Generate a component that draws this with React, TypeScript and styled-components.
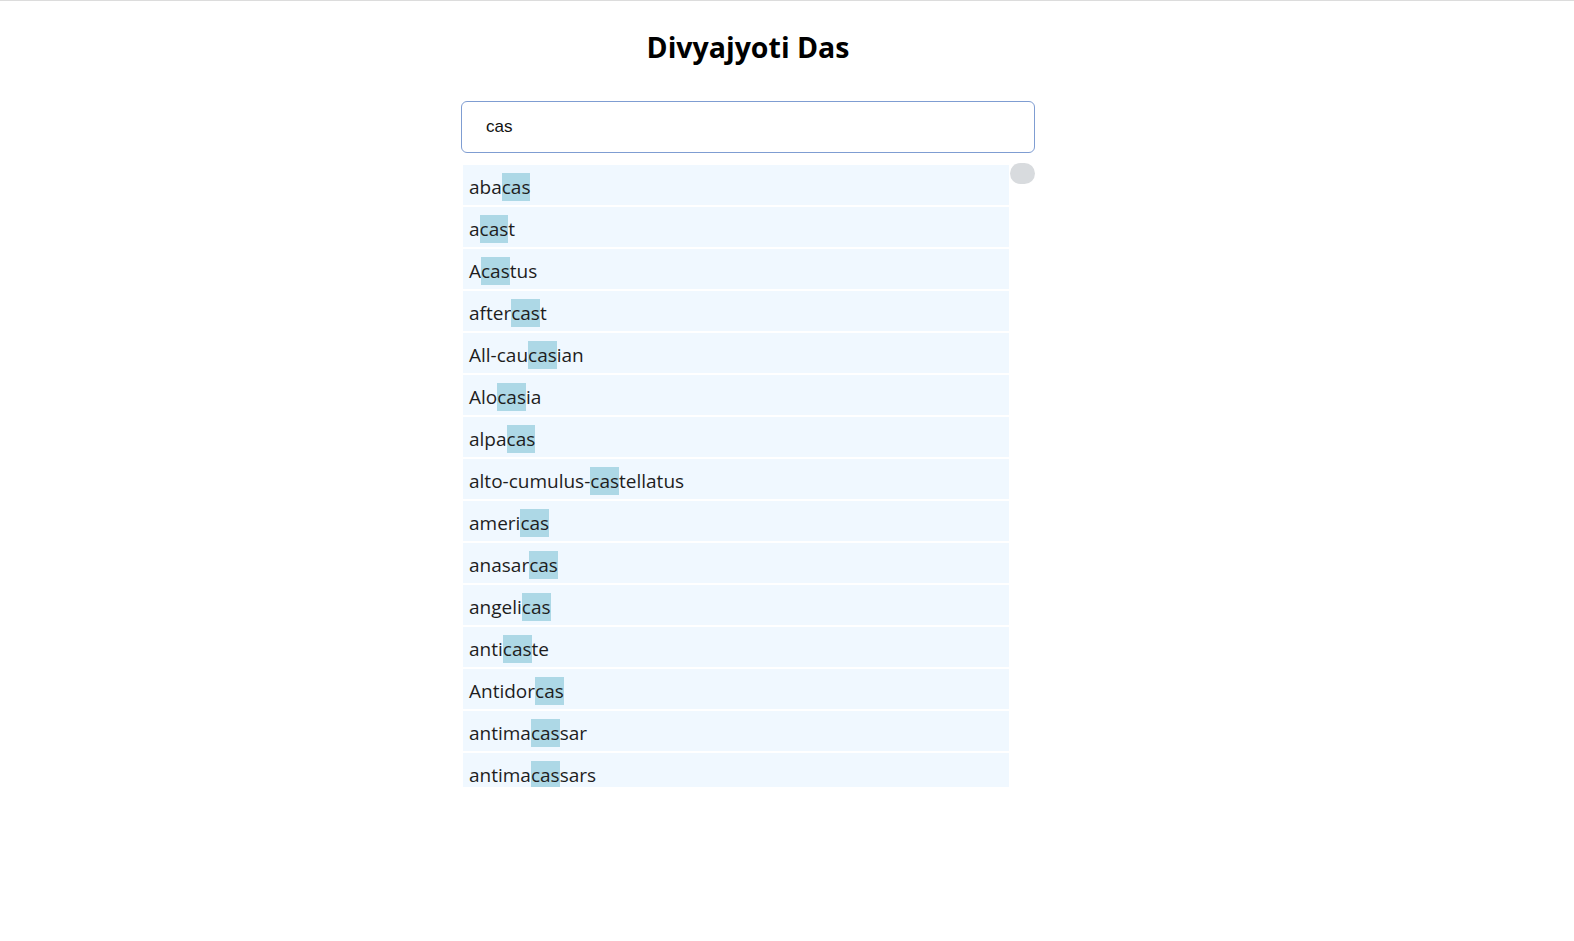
import React from "react";
import styled, { createGlobalStyle } from "styled-components";

const GlobalStyle = createGlobalStyle`
  html, body { margin: 0; padding: 0; background: #ffffff; }
  body { border-top: 1px solid #dcdcdc; font-family: "Open Sans", "Noto Sans", sans-serif; }
`;

const WORDS = [
  "abacas", "acast", "Acastus", "aftercast", "All-caucasian", "Alocasia", "alpacas",
  "alto-cumulus-castellatus", "americas", "anasarcas", "angelicas", "anticaste",
  "Antidorcas", "antimacassar", "antimacassars",
];

const QUERY = "cas";

const Page = styled.main`
  display: flex;
  flex-direction: column;
  align-items: center;
  padding: 0 78px 0 0;
`;

const Title = styled.h1`
  margin: 26px 0 0;
  font-family: "Open Sans", "Noto Sans", sans-serif;
  font-weight: 700;
  font-size: 28.5px;
  line-height: 40px;
  color: #000;
`;

const SearchBox = styled.div`
  width: 574px;
  margin-top: 34px;
  display: flex;
  flex-direction: column;
`;

const Input = styled.input`
  box-sizing: border-box;
  width: 100%;
  height: 52px;
  padding: 0 0 0 24px;
  border: 1px solid #7f9dd2;
  border-radius: 6px;
  outline: none;
  font-family: "Liberation Sans", Arial, sans-serif;
  font-size: 17px;
  color: #111;
  caret-color: #000;
`;

const Results = styled.div`
  display: flex;
  margin-top: 10px;
  height: 624px;
`;

const List = styled.ul`
  flex: 1;
  list-style: none;
  margin: 0;
  padding: 0;
  overflow: hidden;
`;

const Track = styled.div`
  width: 26px;
  display: flex;
  flex-direction: column;
  align-items: flex-end;
`;

const Thumb = styled.div`
  width: 25px;
  height: 21px;
  border-radius: 11px;
  background: #d8dbde;
`;

const Row = styled.li`
  box-sizing: border-box;
  height: 40px;
  margin: 2px 0 0 2px;
  padding: 3px 6px 0;
  display: flex;
  align-items: center;
  background: #f0f8ff;
  font-family: "Open Sans", "Noto Sans", sans-serif;
  font-size: 19px;
  color: #1e1e1e;
  white-space: pre;
`;

const Mark = styled.span`
  background: #add8e6;
  padding: 1px 0;
`;

function Highlighted({ word }: { word: string }) {
  const i = word.toLowerCase().indexOf(QUERY);
  if (i < 0) return <>{word}</>;
  return (
    <span>
      {word.slice(0, i)}
      <Mark>{word.slice(i, i + QUERY.length)}</Mark>
      {word.slice(i + QUERY.length)}
    </span>
  );
}

export default function App() {
  return (
    <>
      <GlobalStyle />
      <Page>
        <Title>Divyajyoti Das</Title>
        <SearchBox>
          <Input defaultValue={QUERY} autoFocus />
          <Results>
            <List>
              {WORDS.map((w) => (
                <Row key={w}>
                  <Highlighted word={w} />
                </Row>
              ))}
            </List>
            <Track>
              <Thumb />
            </Track>
          </Results>
        </SearchBox>
      </Page>
    </>
  );
}
